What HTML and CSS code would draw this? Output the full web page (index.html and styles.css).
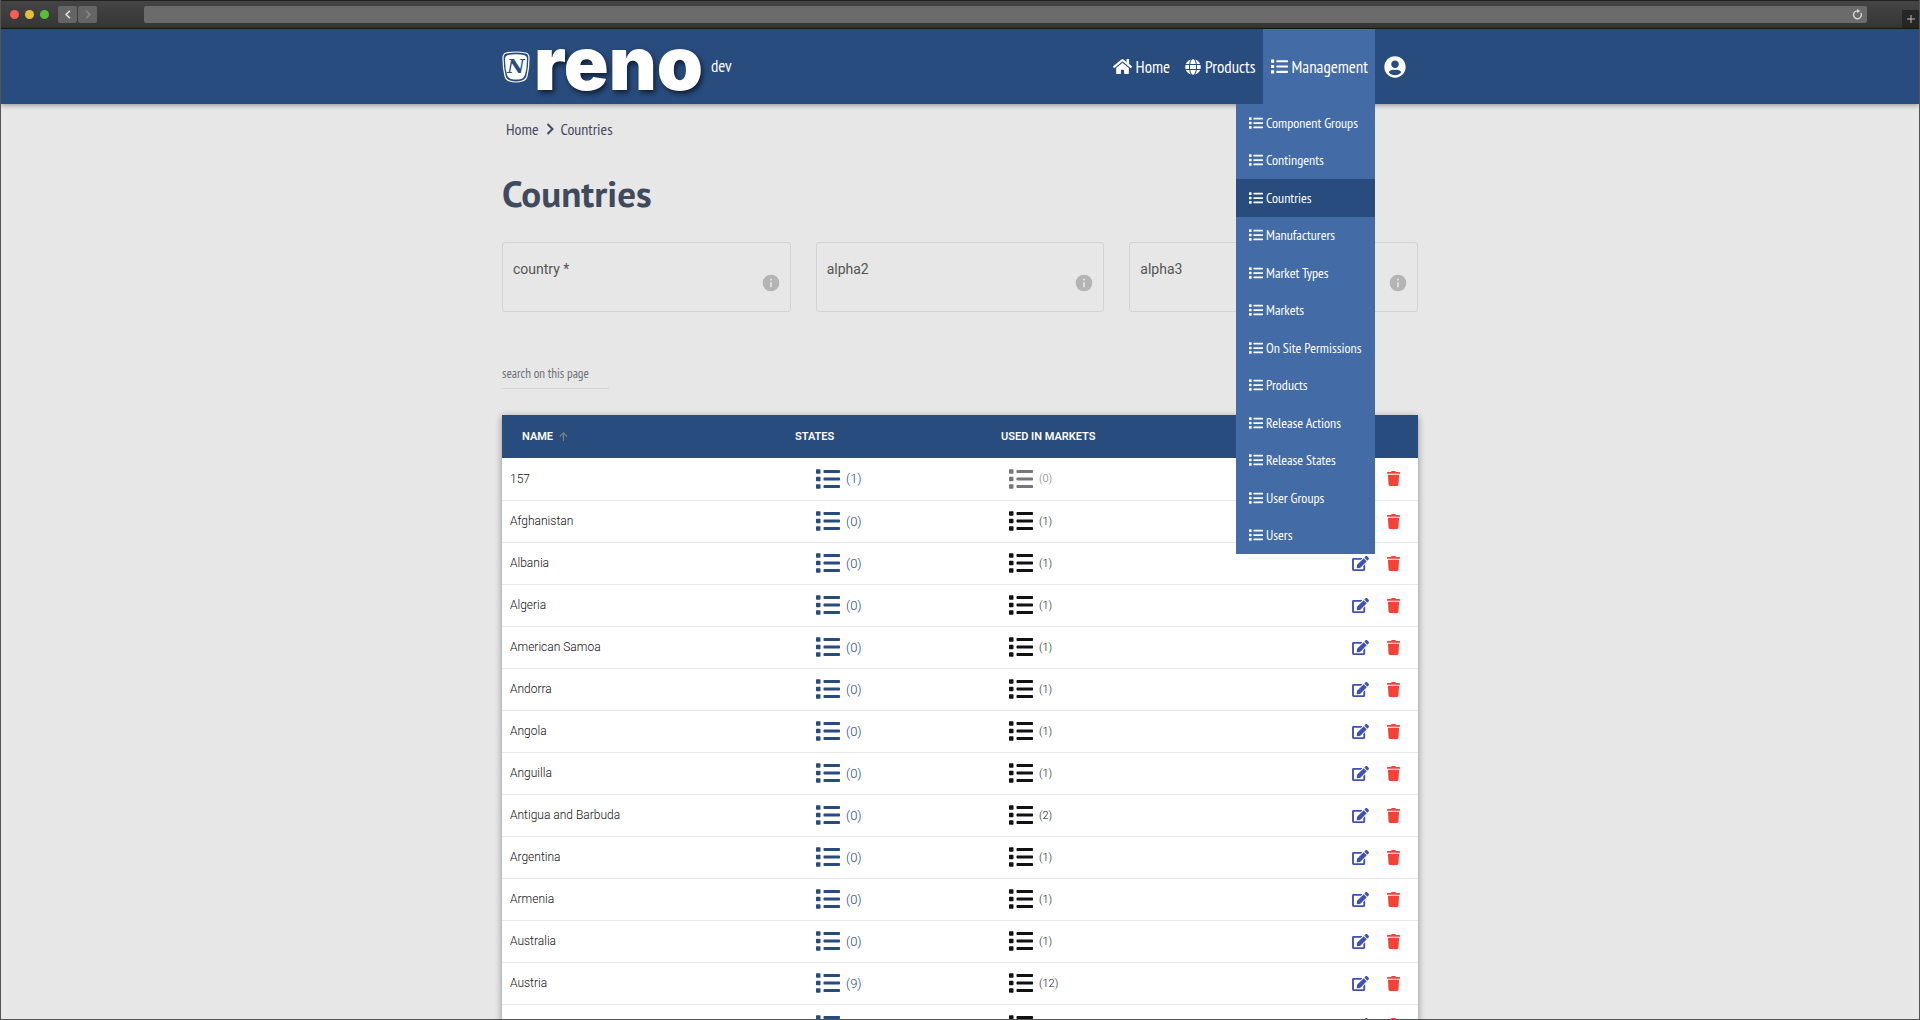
FILE: index.html
```html
<!DOCTYPE html>
<html lang="en">
<head>
	<title>Countries - reno</title>
	<meta charset="utf-8">
	<link rel="stylesheet" href="styles.css">
</head>
<body>
	<!-- Icon sprite -->
	<svg class="sprite" aria-hidden="true">
		<symbol id="list" viewBox="0 0 512 512"><path d="M80 368H16a16 16 0 0 0-16 16v64a16 16 0 0 0 16 16h64a16 16 0 0 0 16-16v-64a16 16 0 0 0-16-16zm0-320H16A16 16 0 0 0 0 64v64a16 16 0 0 0 16 16h64a16 16 0 0 0 16-16V64a16 16 0 0 0-16-16zm0 160H16a16 16 0 0 0-16 16v64a16 16 0 0 0 16 16h64a16 16 0 0 0 16-16v-64a16 16 0 0 0-16-16zm416 176H176a16 16 0 0 0-16 16v32a16 16 0 0 0 16 16h320a16 16 0 0 0 16-16v-32a16 16 0 0 0-16-16zm0-320H176a16 16 0 0 0-16 16v32a16 16 0 0 0 16 16h320a16 16 0 0 0 16-16V80a16 16 0 0 0-16-16zm0 160H176a16 16 0 0 0-16 16v32a16 16 0 0 0 16 16h320a16 16 0 0 0 16-16v-32a16 16 0 0 0-16-16z"/></symbol>
		<symbol id="home" viewBox="0 0 576 512"><path d="M280.37 148.26L96 300.11V464a16 16 0 0 0 16 16l112.06-.29a16 16 0 0 0 15.92-16V368a16 16 0 0 1 16-16h64a16 16 0 0 1 16 16v95.64a16 16 0 0 0 16 16.05L464 480a16 16 0 0 0 16-16V300L295.67 148.26a12.19 12.19 0 0 0-15.3 0zM571.6 251.47L488 182.56V44.05a12 12 0 0 0-12-12h-56a12 12 0 0 0-12 12v72.61L318.47 43a48 48 0 0 0-61 0L4.34 251.47a12 12 0 0 0-1.6 16.9l25.5 31A12 12 0 0 0 45.15 301l235.22-193.74a12.19 12.19 0 0 1 15.3 0L530.9 301a12 12 0 0 0 16.9-1.6l25.5-31a12 12 0 0 0-1.7-16.93z"/></symbol>
		<symbol id="globe" viewBox="0 0 496 512"><path d="M336.5 160C322 70.7 287.8 8 248 8s-74 62.7-88.5 152h177zM152 256c0 22.2 1.2 43.5 3.3 64h185.3c2.1-20.5 3.3-41.8 3.3-64s-1.2-43.5-3.3-64H155.3c-2.1 20.5-3.3 41.8-3.3 64zm324.7-96c-28.6-67.9-86.5-120.4-158-141.6 24.4 33.8 41.2 84.7 50 141.6h108zM177.2 18.4C105.8 39.6 47.8 92.1 19.3 160h108c8.7-56.9 25.5-107.8 49.9-141.6zM487.4 192H372.7c2.1 21 3.3 42.5 3.3 64s-1.2 43-3.3 64h114.6c5.5-20.5 8.6-41.8 8.6-64s-3.1-43.5-8.5-64zM120 256c0-21.5 1.2-43 3.3-64H8.6C3.2 212.5 0 233.8 0 256s3.2 43.5 8.6 64h114.6c-2-21-3.2-42.5-3.2-64zm39.5 96c14.5 89.3 48.7 152 88.5 152s74-62.7 88.5-152h-177zm159.3 141.6c71.4-21.2 129.4-73.7 158-141.6h-108c-8.8 56.9-25.6 107.8-50 141.6zM19.3 352c28.6 67.9 86.5 120.4 158 141.6-24.4-33.8-41.2-84.7-50-141.6h-108z"/></symbol>
		<symbol id="user" viewBox="0 0 496 512"><path d="M248 8C111 8 0 119 0 256s111 248 248 248 248-111 248-248S385 8 248 8zm0 96c48.6 0 88 39.4 88 88s-39.4 88-88 88-88-39.4-88-88 39.4-88 88-88zm0 344c-58.7 0-111.3-26.6-146.5-68.2 18.8-35.4 55.6-59.8 98.5-59.8 2.4 0 4.8.4 7.1 1.1 13 4.2 26.6 6.9 40.9 6.9 14.3 0 28-2.7 40.9-6.9 2.3-.7 4.7-1.1 7.1-1.1 42.9 0 79.7 24.4 98.5 59.8C359.3 421.4 306.7 448 248 448z"/></symbol>
		<symbol id="edit" viewBox="0 0 576 512"><path d="M402.6 83.2l90.2 90.2c3.8 3.8 3.8 10 0 13.8L274.4 405.6l-92.8 10.3c-12.4 1.4-22.9-9.1-21.5-21.5l10.3-92.8L388.8 83.2c3.8-3.8 10-3.8 13.8 0zm162-22.9l-48.8-48.8c-15.2-15.2-39.9-15.2-55.2 0l-35.4 35.4c-3.8 3.8-3.8 10 0 13.8l90.2 90.2c3.8 3.8 10 3.8 13.8 0l35.4-35.4c15.2-15.3 15.2-40 0-55.2zM384 346.2V448H64V128h229.8c3.2 0 6.2-1.3 8.5-3.5l40-40c7.6-7.6 2.2-20.5-8.5-20.5H48C21.5 64 0 85.5 0 112v352c0 26.5 21.5 48 48 48h352c26.5 0 48-21.5 48-48V306.2c0-10.7-12.9-16-20.5-8.5l-40 40c-2.2 2.3-3.5 5.3-3.5 8.5z"/></symbol>
		<symbol id="trash" viewBox="0 0 448 512"><path d="M432 32H312l-9.4-18.7A24 24 0 0 0 281.1 0H166.8a23.72 23.72 0 0 0-21.4 13.3L136 32H16A16 16 0 0 0 0 48v32a16 16 0 0 0 16 16h416a16 16 0 0 0 16-16V48a16 16 0 0 0-16-16zM53.2 467a48 48 0 0 0 47.9 45h245.8a48 48 0 0 0 47.9-45L416 128H32z"/></symbol>
		<symbol id="info" viewBox="0 0 24 24"><path d="M12 2a10 10 0 1 0 0 20 10 10 0 0 0 0-20zm1 15h-2v-6h2v6zm0-8h-2V7h2v2z"/></symbol>
		<symbol id="right" viewBox="0 0 8 12"><path d="M1.5 1L6.5 6L1.5 11" fill="none" stroke="currentColor" stroke-width="2"/></symbol>
		<symbol id="left" viewBox="0 0 8 12"><path d="M6.5 1L1.5 6L6.5 11" fill="none" stroke="currentColor" stroke-width="2"/></symbol>
		<symbol id="up" viewBox="0 0 10 10"><path d="M5 10V1M1 5L5 1L9 5" fill="none" stroke="currentColor" stroke-width="1.4"/></symbol>
		<symbol id="reload" viewBox="0 0 12 12"><path d="M9.8 4.4A4.3 4.3 0 1 1 6 2" fill="none" stroke="currentColor" stroke-width="1.4"/><path d="M5.5 0L9 2.2L5.5 4.4z"/></symbol>
		<symbol id="plus" viewBox="0 0 10 10"><path d="M5 1V9M1 5H9" fill="none" stroke="currentColor"/></symbol>
	</svg>

	<div class="window">
		<div class="toolbar">
			<div class="lights">
				<span class="light red"></span>
				<span class="light yellow"></span>
				<span class="light green"></span>
			</div>
			<div class="history">
				<button type="button" aria-label="Back"><svg class="arrow"><use href="#left"/></svg></button>
				<button type="button" aria-label="Forward" disabled><svg class="arrow"><use href="#right"/></svg></button>
			</div>
			<div class="address">
				<button type="button" aria-label="Reload"><svg class="reload"><use href="#reload"/></svg></button>
			</div>
			<button type="button" class="newtab" aria-label="New tab"><svg class="plus"><use href="#plus"/></svg></button>
		</div>

		<header class="header">
			<div class="container bar">
				<a href="#" class="brand">
					<svg class="shield" viewBox="0 0 28 32">
						<path d="M4 2Q14 0 24 2Q27 3 27 7Q27 17 25 25Q24 29 20 30Q14 32 8 30Q4 29 3 25Q1 17 1 7Q1 3 4 2z" fill="#284c7e" stroke="#fff" stroke-width="1.2"/>
						<path d="M6 4Q14 2.500 22 4Q25 5 25 8Q25 17 23 24Q22 27 19 28Q14 29 9 28Q6 27 5 24Q3 17 3 8Q3 5 6 4z" fill="#fff"/>
						<text x="14" y="22" text-anchor="middle" class="shield-letter">N</text>
					</svg>
					<span class="wordmark">reno</span>
					<span class="stage">dev</span>
				</a>
				<nav class="nav">
					<a href="#"><svg class="icon-home"><use href="#home"/></svg>Home</a>
					<a href="#"><svg class="icon-globe"><use href="#globe"/></svg>Products</a>
					<div class="dropdown">
						<a href="#" class="open"><svg class="icon-list"><use href="#list"/></svg>Management</a>
						<div class="menu">
							<a href="#"><svg><use href="#list"/></svg>Component Groups</a>
							<a href="#"><svg><use href="#list"/></svg>Contingents</a>
							<a href="#" class="active"><svg><use href="#list"/></svg>Countries</a>
							<a href="#"><svg><use href="#list"/></svg>Manufacturers</a>
							<a href="#"><svg><use href="#list"/></svg>Market Types</a>
							<a href="#"><svg><use href="#list"/></svg>Markets</a>
							<a href="#"><svg><use href="#list"/></svg>On Site Permissions</a>
							<a href="#"><svg><use href="#list"/></svg>Products</a>
							<a href="#"><svg><use href="#list"/></svg>Release Actions</a>
							<a href="#"><svg><use href="#list"/></svg>Release States</a>
							<a href="#"><svg><use href="#list"/></svg>User Groups</a>
							<a href="#"><svg><use href="#list"/></svg>Users</a>
						</div>
					</div>
					<a href="#" aria-label="Account" class="account"><svg class="icon-user"><use href="#user"/></svg></a>
				</nav>
			</div>
		</header>

		<main class="container">
			<nav class="crumbs">
				<a href="#">Home</a>
				<svg><use href="#right"/></svg>
				<a href="#">Countries</a>
			</nav>

			<h1>Countries</h1>

			<form class="fields">
				<div class="field">
					<label for="country">country *</label>
					<input type="text" id="country">
					<svg><use href="#info"/></svg>
				</div>
				<div class="field">
					<label for="alpha2">alpha2</label>
					<input type="text" id="alpha2">
					<svg><use href="#info"/></svg>
				</div>
				<div class="field">
					<label for="alpha3">alpha3</label>
					<input type="text" id="alpha3">
					<svg><use href="#info"/></svg>
				</div>
			</form>

			<input type="text" class="search" placeholder="search on this page" aria-label="search on this page">

			<table>
				<thead>
					<tr>
						<th class="name">Name <svg><use href="#up"/></svg></th>
						<th class="states">States</th>
						<th class="markets">Used in markets</th>
						<th class="actions"></th>
					</tr>
				</thead>
				<tbody id="rows"></tbody>
			</table>
		</main>
	</div>

	<script>
		// Name, number of states, number of markets.
		var countries = [
			['157', 1, 0],
			['Afghanistan', 0, 1],
			['Albania', 0, 1],
			['Algeria', 0, 1],
			['American Samoa', 0, 1],
			['Andorra', 0, 1],
			['Angola', 0, 1],
			['Anguilla', 0, 1],
			['Antigua and Barbuda', 0, 2],
			['Argentina', 0, 1],
			['Armenia', 0, 1],
			['Australia', 0, 1],
			['Austria', 9, 12],
			['Azerbaijan', 0, 1]
		];
		var html = '';

		for (var i = 0; i < countries.length; i++)
		{
			var c = countries[i];
			html += '<tr><td class="name">' + c[0] + '</td>' +
				'<td class="states"><a href="#"><svg><use href="#list"/></svg>(' + c[1] + ')</a></td>' +
				'<td class="markets"><a href="#"' + (c[2] ? '' : ' class="empty"') + '><svg><use href="#list"/></svg>(' + c[2] + ')</a></td>' +
				'<td class="actions"><div><button type="button" class="edit" aria-label="Edit"><svg><use href="#edit"/></svg></button>' +
				'<button type="button" class="delete" aria-label="Delete"><svg><use href="#trash"/></svg></button></div></td></tr>';
		}

		document.getElementById('rows').innerHTML = html;
	</script>
</body>
</html>
```
FILE: styles.css
```css
* {
	box-sizing: border-box;
}

body {
	margin: 0;
	background: #333;
	color: #3f4a5c;
	font-family: "PT Sans Narrow", "Liberation Sans Narrow", "Open Sans Condensed", "Liberation Sans", sans-serif;
	font-size: 16px;
}

a {
	color: inherit;
	text-decoration: none;
}

button {
	padding: 0;
	border: 0;
	background: none;
	color: inherit;
}

svg {
	display: block;
	flex: none;
	fill: currentColor;
}

.sprite {
	position: absolute;
	width: 0;
	height: 0;
}

.window {
	height: 100vh;
	overflow: hidden;
	border: 1px solid #555;
	border-top: 0;
	background: #e7e7e7;
}

/* Browser toolbar */
.toolbar {
	display: flex;
	align-items: center;
	height: 29px;
	padding-left: 9px;
	background: linear-gradient(#454545, #353535);
	border-top: 1px solid #222;
	border-bottom: 1px solid #1c1c1c;
}

.lights {
	display: flex;
	gap: 6px;
	margin-right: 9px;
}

.light {
	width: 9px;
	height: 9px;
	border-radius: 50%;
}

.red {
	background: #fc5b57;
}

.yellow {
	background: #e5bf3c;
}

.green {
	background: #57c038;
}

.history {
	display: flex;
	gap: 1px;
	margin-right: 47px;
}

.history button {
	display: flex;
	align-items: center;
	justify-content: center;
	width: 19px;
	height: 17px;
	border-radius: 2px;
	background: #656565;
	color: #e8e8e8;
}

.history button:disabled {
	color: #8a8a8a;
}

.arrow {
	width: 6px;
	height: 9px;
}

.address {
	display: flex;
	flex: 1;
	align-items: center;
	justify-content: flex-end;
	height: 17px;
	padding-right: 4px;
	border-radius: 2px;
	background: #6b6b6b;
	color: #ddd;
}

.reload {
	width: 11px;
	height: 11px;
}

.newtab {
	display: flex;
	align-self: flex-end;
	align-items: center;
	justify-content: center;
	width: 17px;
	height: 18px;
	margin-left: 35px;
	background: #262626;
	color: #bbb;
}

.plus {
	width: 10px;
	height: 10px;
}

/* Header */
.container {
	width: 100%;
	max-width: 916px;
	margin: 0 auto;
}

.header {
	position: relative;
	background: #284c7e;
	box-shadow: 0 1px 5px rgba(0,0,0,0.4);
	color: #fff;
	font-size: 17px;
}

.bar {
	display: flex;
	justify-content: space-between;
	height: 75px;
	padding-right: 5px;
}

.brand {
	display: flex;
	align-items: center;
}

.shield {
	width: 28px;
	height: 32px;
}

.shield-letter {
	fill: #284c7e;
	font: italic bold 19px "DejaVu Serif", serif;
}

.wordmark {
	margin: 0 8px 8px 4px;
	font: 900 74px/60px Inter, sans-serif;
	text-shadow: 2px 3px 5px rgba(0,0,0,0.6);
}

.stage {
	margin-bottom: 2px;
}

.nav {
	display: flex;
}

.nav a {
	display: flex;
	align-items: center;
	gap: 4px;
	padding: 0 7px 0 8px;
}

.nav .account {
	padding-left: 9px;
}

.dropdown {
	display: flex;
	position: relative;
}

.nav .open {
	background: #436ba5;
}

.icon-home {
	width: 19px;
	height: 17px;
}

.icon-globe {
	width: 16px;
	height: 16px;
}

.icon-list {
	width: 17px;
	height: 17px;
}

.icon-user {
	width: 22px;
	height: 22px;
}

.menu {
	display: grid;
	grid-template-rows: repeat(12, 1fr);
	position: absolute;
	top: 75px;
	right: 0;
	width: 139px;
	height: 450px;
	background: #436ba5;
	font-size: 14px;
	white-space: nowrap;
}

.nav .menu a {
	gap: 3px;
	padding: 0 0 0 13px;
}

.menu svg {
	width: 14px;
	height: 14px;
}

.menu .active {
	background: #284c7e;
}

/* Content */
.crumbs {
	display: flex;
	align-items: center;
	gap: 7px;
	padding: 15px 4px 0;
	line-height: 20px;
}

.crumbs svg {
	width: 8px;
	height: 12px;
}

h1 {
	margin: 29px 0 24px;
	font-family: "PT Sans", "PT Sans Narrow", "Noto Sans", sans-serif;
	font-size: 37px;
	line-height: 50px;
}

.fields {
	display: grid;
	grid-template-columns: repeat(3, 1fr);
	gap: 25px;
}

.field {
	display: grid;
	grid-template-columns: 1fr 20px;
	grid-template-rows: 18px 25px;
	height: 70px;
	padding: 17px 9px 0 10px;
	border: 1px solid #d2d2d2;
	border-radius: 3px;
	color: #555;
	font: 14px/18px Roboto, sans-serif;
}

.field label {
	grid-column: 1 / 3;
}

.field input {
	min-width: 0;
	border: 0;
	background: none;
	outline: 0;
}

.field svg {
	width: 20px;
	height: 20px;
	margin-top: -5px;
	color: #b4b4b4;
}

.search {
	display: block;
	width: 107px;
	height: 30px;
	margin: 47px 0 26px;
	padding: 0;
	border: 0;
	border-bottom: 1px solid #d6d6d6;
	background: none;
	font: inherit;
	font-size: 13px;
}

.search::placeholder {
	color: #6b7078;
	opacity: 1;
}

table {
	width: 100%;
	table-layout: fixed;
	border-collapse: collapse;
	background: #fff;
	box-shadow: 0 2px 7px rgba(0,0,0,0.4);
	color: #111;
	font: 300 12px Roboto, sans-serif;
}

th {
	height: 43px;
	padding: 0;
	background: #284c7e;
	color: #fff;
	font-size: 11px;
	font-weight: 600;
	text-align: left;
	text-transform: uppercase;
}

th.name {
	width: 293px;
	padding-left: 20px;
}

th.states {
	width: 206px;
}

th.actions {
	width: 110px;
}

th svg {
	display: inline-block;
	width: 9px;
	height: 9px;
	margin-left: 3px;
	vertical-align: -1px;
	color: #7d7d7d;
}

td {
	height: 42px;
	padding: 0;
	border-bottom: 1px solid #e8e8e8;
}

td.name {
	padding-left: 8px;
}

td a {
	display: flex;
	align-items: center;
	gap: 6px;
}

td a svg {
	width: 24px;
	height: 24px;
}

td.states {
	padding-left: 21px;
	color: #284c7e;
	font-size: 13px;
}

td.markets {
	padding-left: 8px;
	color: #111;
	font-size: 11px;
}

td .empty {
	color: #777;
}

td.actions div {
	display: flex;
	align-items: center;
	justify-content: flex-end;
	gap: 18px;
	padding-right: 18px;
}

.edit {
	color: #3f51b5;
}

.edit svg {
	width: 17px;
	height: 15px;
}

.delete {
	color: #f44336;
}

.delete svg {
	width: 13px;
	height: 15px;
}
```
